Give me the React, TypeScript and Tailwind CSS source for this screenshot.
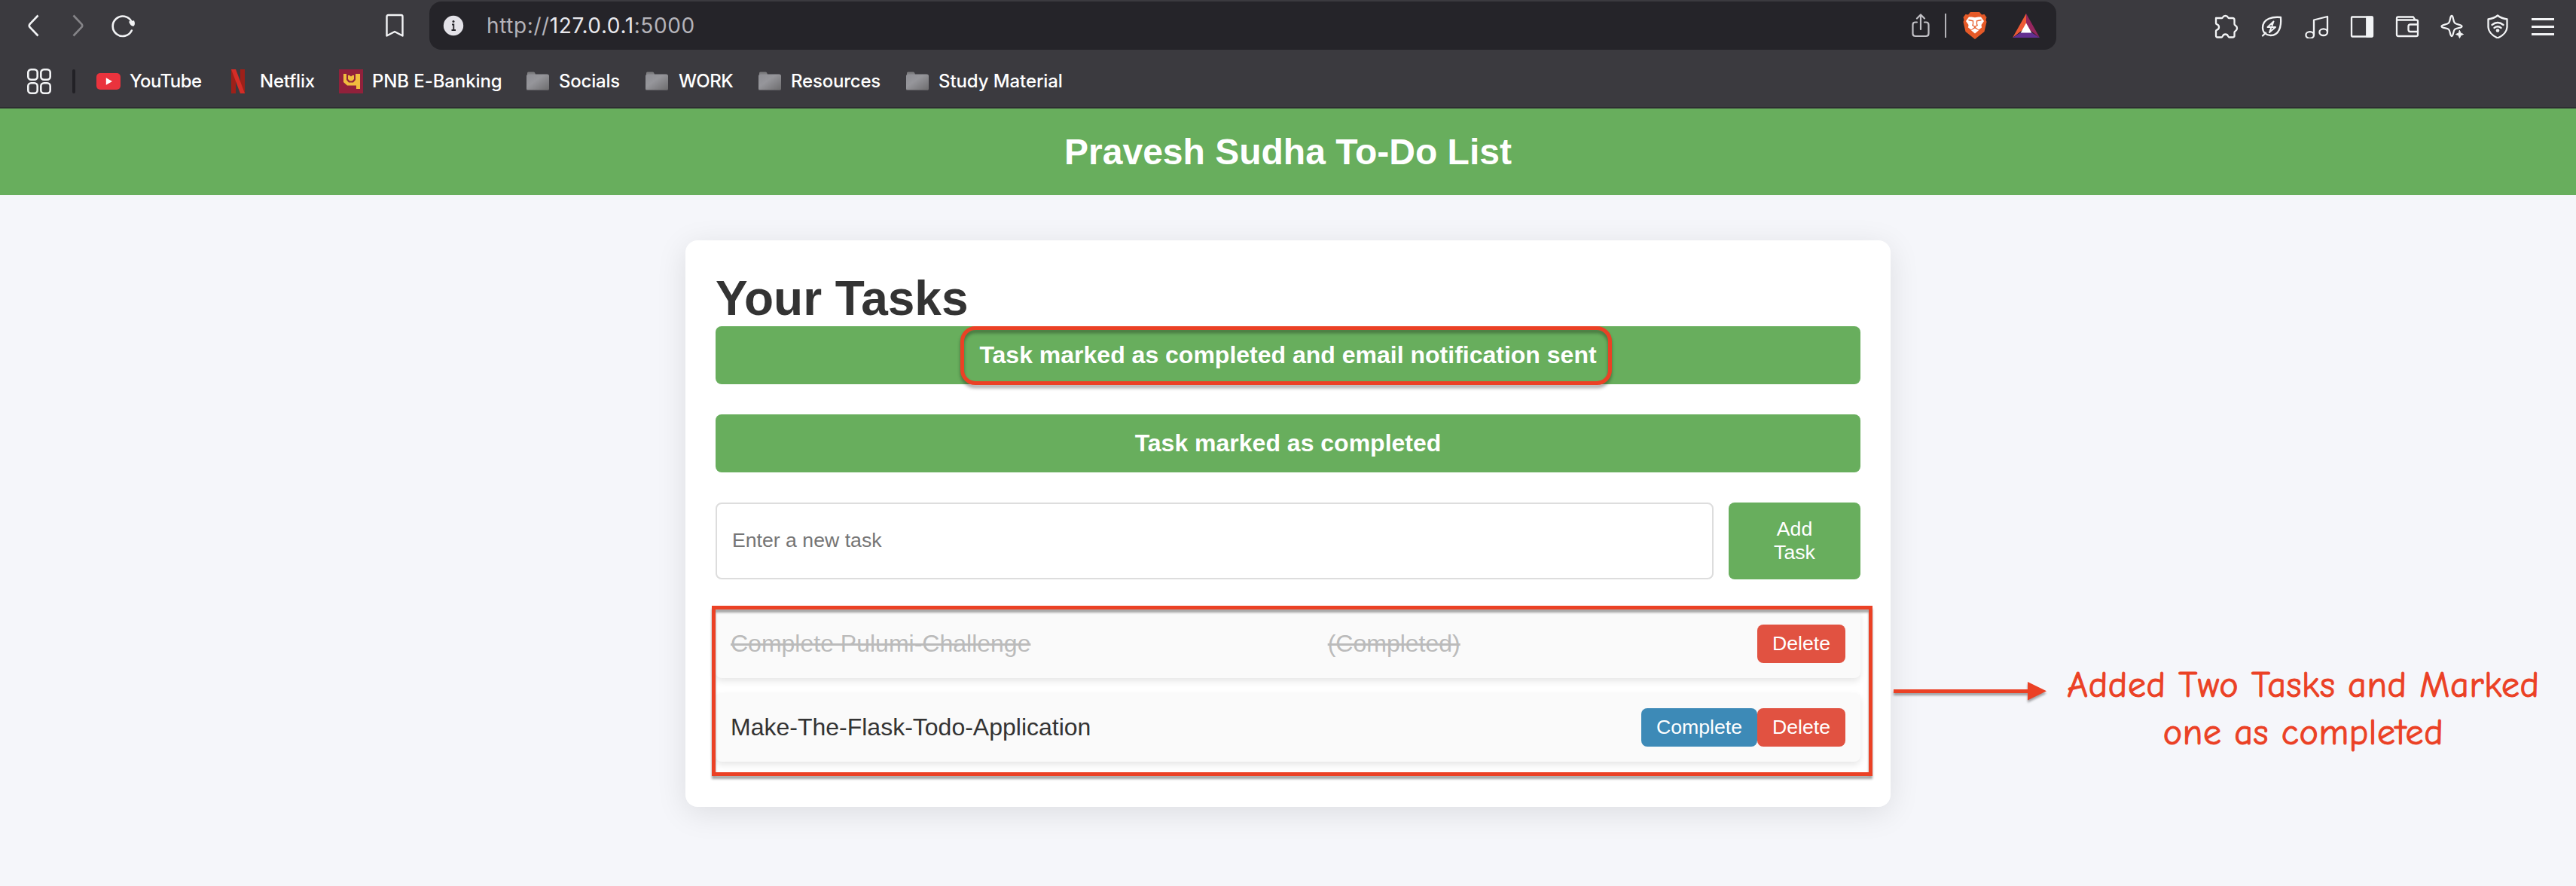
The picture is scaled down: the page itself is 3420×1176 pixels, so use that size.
import React from "react";

const UI = "font-['Inter',sans-serif]";

function Bookmark({ icon, label, w, gap, tracking }: { icon: React.ReactNode; label: string; w: string; gap: string; tracking: string }) {
  return (
    <div className={`flex shrink-0 items-center ${w} ${gap}`}>
      {icon}
      <span className={`whitespace-nowrap text-2xl leading-8 ${tracking}`}>{label}</span>
    </div>
  );
}

function Folder() {
  return (
    <svg className="h-[26px] w-[30px] shrink-0" viewBox="0 0 30 26">
      <defs>
        <linearGradient id="folder" x1="0" y1="0" x2="1" y2="1">
          <stop offset="0" stopColor="#8e8e94" />
          <stop offset="0.4" stopColor="#96969b" />
          <stop offset="1" stopColor="#6c6b6d" />
        </linearGradient>
      </defs>
      <path d="M1 6V2Q1 .5 2.5 .5H9.5Q11 .5 11.6 2.5L12 4H28V8H1Z" fill="#7d7d80" />
      <rect x="0" y="3.4" width="30" height="21.6" rx="2.5" fill="url(#folder)" />
      <path d="M1 24.6H29" stroke="#5c5b5e" strokeWidth="1" />
    </svg>
  );
}

function YouTube() {
  return (
    <svg className="h-[22px] w-8 shrink-0" viewBox="0 0 32 22">
      <rect width="32" height="22" rx="5" fill="#ea333d" />
      <path d="M12.8 6.3L21 11L12.8 15.7Z" fill="#fff" />
    </svg>
  );
}

function Netflix() {
  return (
    <svg className="h-8 w-[18px] shrink-0" viewBox="0 0 18 32">
      <path d="M0 0H6V32H0ZM12 0H18V32H12Z" fill="#9d2019" />
      <path d="M0 0H6L18 32H12Z" fill="#d32d27" />
    </svg>
  );
}

function Pnb() {
  return (
    <svg className="h-8 w-8 shrink-0" viewBox="0 0 32 32">
      <rect width="32" height="32" fill="#91213b" />
      <path d="M6 6H10V14L13 17.5H19L22 14V6H28V26H23V21.5H11L6 17Z" fill="#f0bd3e" />
      <path d="M12 8H14L16 9.5L18 8H20V13L17.500 15.500H14.500L12 13Z" fill="#f0bd3e" />
    </svg>
  );
}

function Brave() {
  return (
    <svg className="h-9 w-8" viewBox="0 0 32 36">
      <path d="M10 0H22L25 3.500 28.500 3 31.500 7 30.500 10.500 31.500 13 28.500 26 16 36 3.500 26 .5 13 1.500 10.500 .5 7 3.500 3 7 3.500Z" fill="#e65a28" />
      <path d="M11.500 6.500L16 7.200 20.500 6.500 24 6.500 28 12 24.500 17 25 20.500 21 23.500 16 19.500 11 23.500 7 20.500 7.500 17 4 12 8 6.500Z" fill="#fff" />
      <path d="M11 24.300L16 21.500 21 24.300 16 28.500Z" fill="#fff" />
      <path d="M7.500 10.500L13.500 11.800V16L12.800 17.500 16 19.500 19.200 17.500 18.500 16V11.800L24.500 10.500" fill="none" stroke="#e65a28" strokeWidth="1.300" />
    </svg>
  );
}

const stroke = { fill: "none", stroke: "#f2f3f5", strokeWidth: 2.3, strokeLinejoin: "round", strokeLinecap: "round" } as const;

function ToolbarIcons() {
  return (
    <div className="flex items-center gap-7 pt-0.5">
      <svg className="size-8" viewBox="0 0 32 32" {...stroke}>
        <path d="M2.500 5H10C11.500 5 10.500 2 14.500 2S17.500 5 19 5H24Q26.500 5 26.500 7.500V13C26.500 15 30 14.500 30 18.500S26.500 22 26.500 24V28.500Q26.500 30.500 24 30.500H19.500C17.500 30.500 19 26.500 14.500 26.500S11.500 30.500 9.500 30.500H4Q2 30.500 2 28.500V22C2 20 6 21.500 6 17S2 14 2 12V5" />
      </svg>
      <svg className="size-8" viewBox="0 0 32 32" {...stroke}>
        <path d="M28 4C18 3 4 5 4 18C4 24 9 28 14.500 28C26 28 29 16 28 4ZM4 28.500L8 24.500" />
        <path d="M18.500 9.500L10.500 17H21L13 24L15.500 17M18.500 9.500L16.500 15" strokeWidth="2" />
      </svg>
      <svg className="size-8" viewBox="0 0 32 32" {...stroke}>
        <path d="M12 27V7.500L30 3V23" />
        <ellipse cx="6.700" cy="27.500" rx="5.300" ry="4.300" />
        <ellipse cx="24.700" cy="23.700" rx="5.300" ry="4.300" />
      </svg>
      <svg className="size-8" viewBox="0 0 32 32" {...stroke}>
        <rect x="2" y="3.500" width="28" height="26" rx="1" />
        <path d="M22 3H30V30H22Z" fill="#f2f3f5" strokeWidth="1" />
      </svg>
      <svg className="size-8" viewBox="0 0 32 32" {...stroke}>
        <path d="M2 7.500V5.500Q2 3.500 4 3.500H24L26.500 7.500M2 7.500H28Q30 7.500 30 9.500V27Q30 29 28 29H4Q2 29 2 27ZM30 13.500H20Q17.500 13.500 17.500 16V20.500Q17.500 23 20 23H30" />
      </svg>
      <svg className="size-8" viewBox="0 0 32 32" {...stroke}>
        <path d="M15 2C17.500 2 16.500 9 19 11.500S28.500 13.500 28.500 16S21.500 17.500 19 20S17.500 29 15 29S13.500 22.500 11 20S1.500 18.500 1.500 16S8.500 14 11 11.500S12.500 2 15 2Z" />
        <path d="M25.500 21.500L27 25 30.500 26.500 27 28 25.500 31.500 24 28 20.500 26.500 24 25Z" fill="#f2f3f5" strokeWidth="1" />
      </svg>
      <svg className="size-8" viewBox="0 0 32 32" {...stroke}>
        <path d="M16 1.500Q21 5.500 28.500 6.500V17Q28 26 16 31.500Q4 26 3.500 17V6.500Q11 5.500 16 1.500Z" />
        <path d="M8.500 14Q16 8 23.500 14M11.500 18Q16 14.500 20.500 18" />
        <circle cx="16" cy="21.500" r="1.200" fill="#f2f3f5" />
      </svg>
      <svg className="size-8" viewBox="0 0 32 32">
        <path d="M1 6.500H31M1 16.500H31M1 26.500H31" stroke="#f2f3f5" strokeWidth="2.800" />
      </svg>
    </div>
  );
}

function Browser() {
  return (
    <div className={`flex h-36 flex-col border-b-2 border-[#2e2d32] bg-[#3b3a3f] text-white ${UI}`}>
      <div className="flex h-[66px] items-stretch pt-0.5">
        <div className="flex w-[570px] shrink-0 items-center pl-9">
          <svg className="h-8 w-4" viewBox="0 0 16 32">
            <path d="M14.500 2.500L3.500 14Q2 16 3.500 18L14.500 29.500" fill="none" stroke="#f2f3f5" strokeWidth="2.600" />
          </svg>
          <svg className="ml-11 h-8 w-4" viewBox="0 0 16 32">
            <path d="M1.500 2.500L12.500 14Q14 16 12.500 18L1.500 29.500" fill="none" stroke="#858488" strokeWidth="2.600" />
          </svg>
          <svg className="ml-9 size-8" viewBox="0 0 32 32">
            <path d="M26.500 10.500A13.200 13.200 0 1 0 26.800 22.500" fill="none" stroke="#f2f3f5" strokeWidth="2.600" strokeLinecap="round" />
            <path d="M23 10.500L30 9.200Q32 14 29.500 16.800Q25 17 23 10.500Z" fill="#f2f3f5" />
          </svg>
          <svg className="ml-[332px] h-8 w-6" viewBox="0 0 24 32">
            <path d="M1.500 4Q1.500 2 3.500 2H20.500Q22.500 2 22.500 4V29.500L12 24L1.500 29.500Z" fill="none" stroke="#f2f3f5" strokeWidth="2.400" strokeLinejoin="round" />
          </svg>
        </div>
        <div className="flex w-[2160px] items-center rounded-2xl bg-[#252429] pl-[18px] pr-[22px]">
          <svg className="size-7" viewBox="0 0 28 28">
            <circle cx="14" cy="14" r="13.200" fill="#e3e2e8" />
            <circle cx="14" cy="8.600" r="1.500" fill="#252429" />
            <path d="M12 12.500H14.300V20M11.500 20H17" fill="none" stroke="#252429" strokeWidth="1.800" />
          </svg>
          <span className="ml-[30px] whitespace-nowrap text-[28px] leading-8 tracking-[0.600px] text-[#b4b3b9]">
            http://<span className="text-[#e8e7ec]">127.0.0.1</span>:5000
          </span>
          <div className="ml-auto flex items-center">
            <svg className="h-8 w-6" viewBox="0 0 24 32" fill="none" stroke="#c2c1c6" strokeWidth="2.200" strokeLinecap="round" strokeLinejoin="round">
              <path d="M12 21V2M7 6.500L12 1.500L17 6.500M7 11.500H5Q1.500 11.500 1.500 15V26.500Q1.500 30 5 30H19Q22.500 30 22.500 26.500V15Q22.500 11.500 19 11.500H17" />
            </svg>
            <div className="ml-5 h-8 w-0.5 bg-[#b4b3b8]" />
            <div className="ml-[22px]"><Brave /></div>
            <svg className="ml-[34px] h-8 w-9" viewBox="0 0 36 32">
              <path d="M18 0L0 32L18 18Z" fill="#ee5a36" />
              <path d="M18 0L36 32L18 18Z" fill="#95265e" />
              <path d="M0 32H36L25 25H11Z" fill="#632f91" />
              <path d="M18 12.500L25.300 25.500H10.700Z" fill="#fff" />
            </svg>
          </div>
        </div>
        <div className="ml-auto flex items-center pr-[28px]"><ToolbarIcons /></div>
      </div>
      <div className="flex h-[76px] items-center pl-9 pt-1 font-[450]">
        <svg className="mt-1 h-9 w-8 shrink-0" viewBox="0 0 32 36" fill="none" stroke="#f2f3f5" strokeWidth="2.600">
          <rect x="1.300" y="2.300" width="12.400" height="13.400" rx="4" />
          <rect x="18.300" y="2.300" width="12.400" height="13.400" rx="4" />
          <rect x="1.300" y="20.300" width="12.400" height="13.400" rx="4" />
          <rect x="18.300" y="20.300" width="12.400" height="13.400" rx="4" />
        </svg>
        <div className="ml-7 mt-1 h-8 w-1 shrink-0 rounded-sm bg-[#222126]" />
        <div className="ml-7 mt-1 flex">
          <Bookmark w="w-[179px]" gap="gap-3" tracking="tracking-[-0.600px]" icon={<YouTube />} label="YouTube" />
          <Bookmark w="w-[143px]" gap="gap-5" tracking="tracking-[-0.200px]" icon={<Netflix />} label="Netflix" />
          <Bookmark w="w-[249px]" gap="gap-3" tracking="tracking-[-0.100px]" icon={<Pnb />} label="PNB E-Banking" />
          <Bookmark w="w-[158px]" gap="gap-[13px]" tracking="tracking-[-0.200px]" icon={<Folder />} label="Socials" />
          <Bookmark w="w-[150px]" gap="gap-3.5" tracking="tracking-[-0.500px]" icon={<Folder />} label="WORK" />
          <Bookmark w="w-[196px]" gap="gap-[13px]" tracking="tracking-[-0.200px]" icon={<Folder />} label="Resources" />
          <Bookmark w="w-[220px]" gap="gap-[13px]" tracking="tracking-[-0.100px]" icon={<Folder />} label="Study Material" />
        </div>
      </div>
    </div>
  );
}

const small = "rounded-lg px-5 py-2.5 text-[26.667px] leading-[31px] text-white";
const row = "flex h-[91px] items-center justify-between rounded-lg bg-[#fafafa] px-5 text-[32px] leading-[37px] shadow-[0_4px_10px_rgba(0,0,0,0.1)]";

export default function App() {
  return (
    <div className="relative h-[1176px] w-[3420px] overflow-hidden bg-[#f5f6fa] font-['Liberation_Sans',Arial,sans-serif] text-[#333]">
      <Browser />
      <header className="flex h-[115px] items-center justify-center bg-[#68ae5d]">
        <h1 className="text-5xl font-bold text-white">Pravesh Sudha To-Do List</h1>
      </header>
      <main className="relative mx-auto mt-[60px] h-[752px] w-[1600px] rounded-2xl bg-white p-10 shadow-[0_8px_40px_rgba(0,0,0,0.1)]">
        <h2 className="h-[74px] text-[64px] font-bold leading-[74px]">Your Tasks</h2>
        <div className="mb-10 rounded-lg bg-[#68ae5d] p-5 text-center text-[32px] font-bold leading-[37px] text-white">
          Task marked as completed and email notification sent
        </div>
        <div className="mb-10 rounded-lg bg-[#68ae5d] p-5 text-center text-[32px] font-bold leading-[37px] text-white">
          Task marked as completed
        </div>
        <form className="mb-10 flex h-[102px] gap-5">
          <input
            className="flex-1 rounded-lg border-2 border-[#ddd] px-5 text-[26.667px] placeholder:text-[#757575]"
            placeholder="Enter a new task"
          />
          <button type="button" className="w-[175px] rounded-lg bg-[#68ae5d] px-10 text-[26.667px] leading-[31px] text-white">
            Add Task
          </button>
        </form>
        <ul className="flex flex-col gap-5">
          <li className={row}>
            <span className="text-[#bbb] line-through">Complete Pulumi-Challenge</span>
            <span className="text-[#bbb] line-through">(Completed)</span>
            <button className={`${small} w-[117px] bg-[#e15241]`}>Delete</button>
          </li>
          <li className={row}>
            <span>Make-The-Flask-Todo-Application</span>
            <div className="flex">
              <button className={`${small} w-[154px] bg-[#3d8ab7]`}>Complete</button>
              <button className={`${small} w-[117px] bg-[#e15241]`}>Delete</button>
            </div>
          </li>
        </ul>
        <div className="absolute left-[365px] top-[114px] h-[78px] w-[865px] rounded-[20px] border-[5px] border-[#eb4125] drop-shadow-[0_4px_2px_rgba(0,0,0,0.35)]" />
        <div className="absolute left-[35px] top-[485px] h-[226px] w-[1541px] border-[5px] border-[#eb4125] drop-shadow-[0_4px_1.500px_rgba(0,0,0,0.35)]" />
      </main>
      <svg className="absolute left-[2514px] top-[900px] h-9 w-[204px] drop-shadow-[0_3px_1.500px_rgba(0,0,0,0.35)]" viewBox="0 0 204 36">
        <path d="M0 15H178V5L203 17.200L178 29.500V20H0Z" fill="#eb4125" />
      </svg>
      <div className="absolute left-[2718px] top-[878px] w-[680px] whitespace-nowrap text-center font-['Comic_Sans_MS','Comic_Neue',cursive] text-[48px] leading-[63px] tracking-[0.600px] text-[#eb4125] [-webkit-text-stroke:1px_#eb4125]">
        Added Two Tasks and Marked
        <br />
        one as completed
      </div>
    </div>
  );
}
